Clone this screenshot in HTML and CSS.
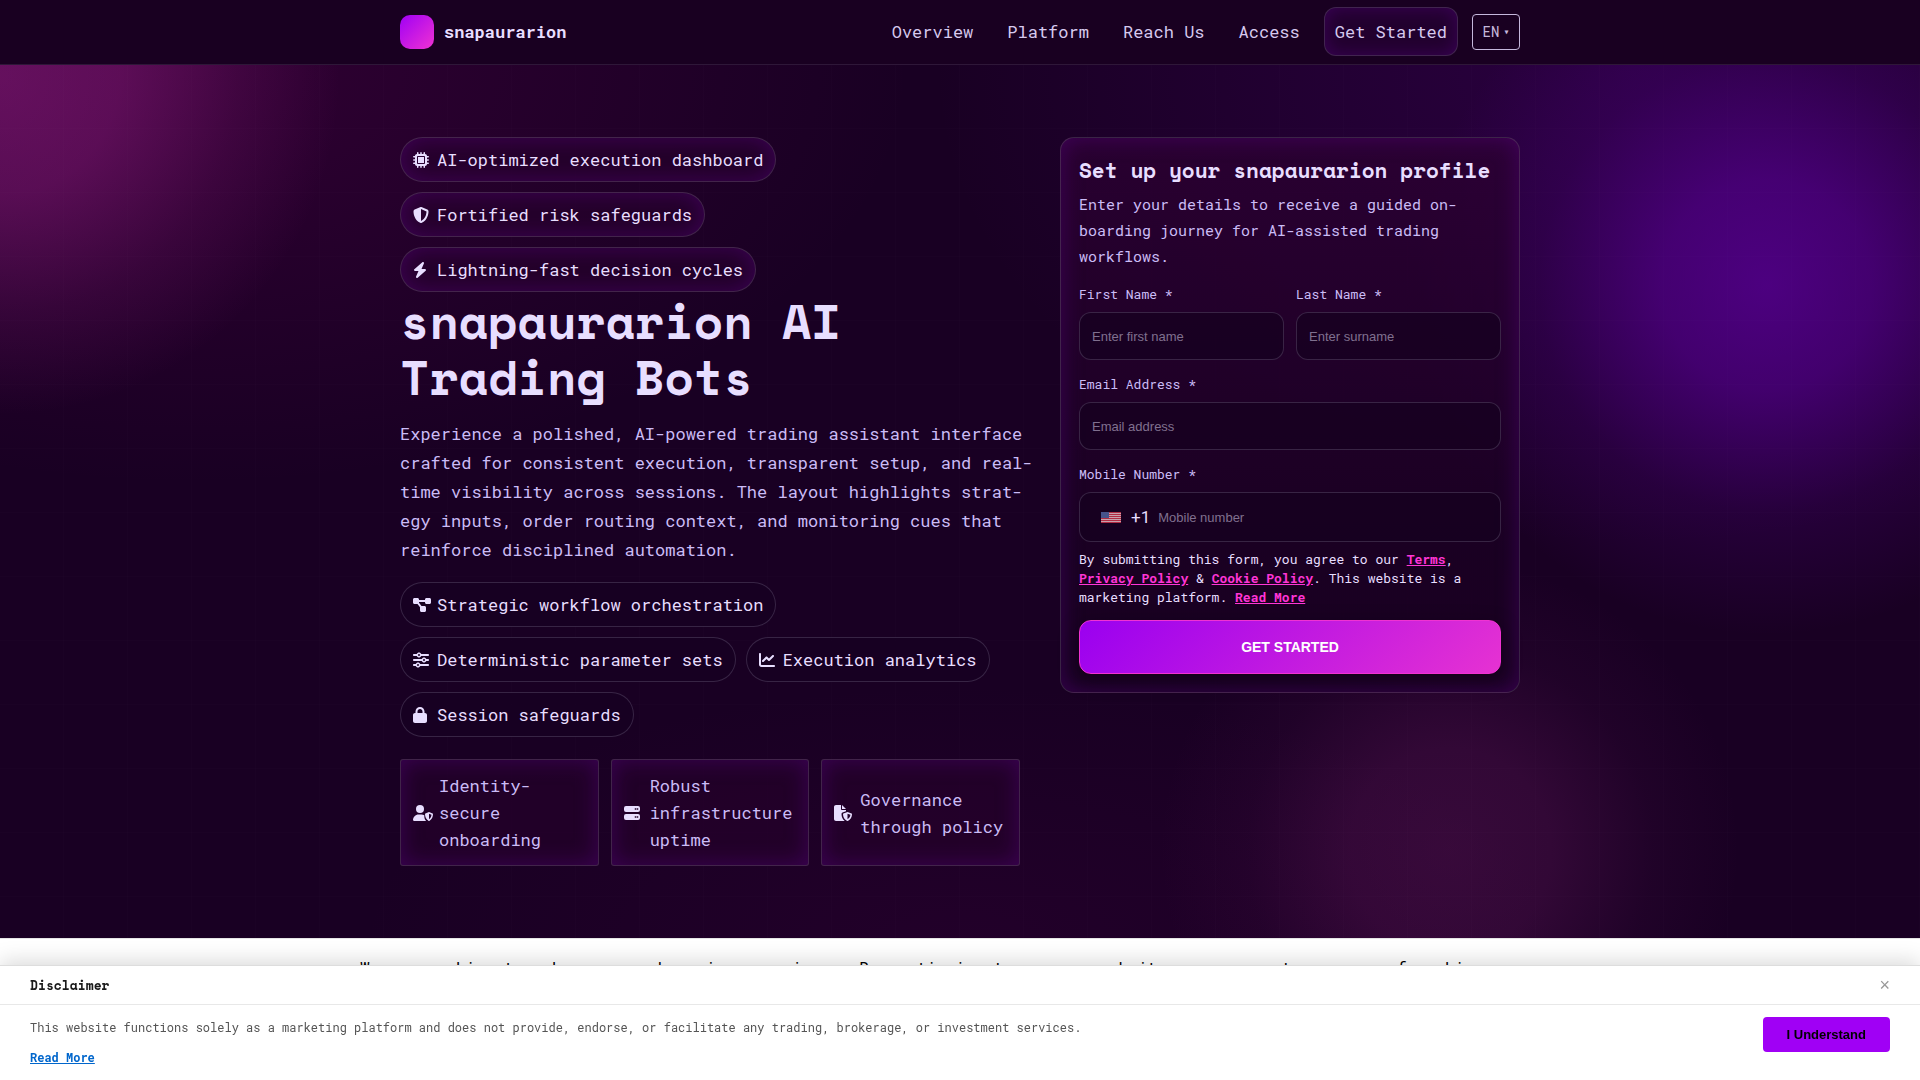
FILE: index.html
```html
<!DOCTYPE html>
<html lang="en">
<head>
  <meta charset="UTF-8">
  <meta name="viewport" content="width=device-width, initial-scale=1.0">
  <title>snapaurarion AI Trading Bots</title>
  <link rel="stylesheet" href="styles.css">
</head>
<body>

  <header class="site-header">
    <div class="container header-inner">
      <a href="#" class="brand"><span class="brand-mark"></span>snapaurarion</a>
      <nav class="main-nav">
        <a href="#overview">Overview</a>
        <a href="#platform">Platform</a>
        <a href="#contact">Reach Us</a>
        <a href="#access">Access</a>
        <a href="#signup" class="nav-cta">Get Started</a>
        <button type="button" class="lang-btn">EN <span class="caret">▾</span></button>
      </nav>
    </div>
  </header>

  <main>
    <section class="hero">
      <div class="container hero-grid">
        <div class="hero-copy">
          <div class="badges">
            <span class="pill glow">
              <span class="icon"><svg viewBox="0 0 512 512" width="16" height="16"><path fill-rule="evenodd" d="M176 24c0-13.3-10.7-24-24-24s-24 10.7-24 24l0 40c-35.3 0-64 28.7-64 64l-40 0c-13.3 0-24 10.7-24 24s10.7 24 24 24l40 0 0 56-40 0c-13.3 0-24 10.7-24 24s10.7 24 24 24l40 0 0 56-40 0c-13.3 0-24 10.7-24 24s10.7 24 24 24l40 0c0 35.3 28.7 64 64 64l0 40c0 13.3 10.7 24 24 24s24-10.7 24-24l0-40 56 0 0 40c0 13.3 10.7 24 24 24s24-10.7 24-24l0-40 56 0 0 40c0 13.3 10.7 24 24 24s24-10.7 24-24l0-40c35.3 0 64-28.7 64-64l40 0c13.3 0 24-10.7 24-24s-10.7-24-24-24l-40 0 0-56 40 0c13.3 0 24-10.7 24-24s-10.7-24-24-24l-40 0 0-56 40 0c13.3 0 24-10.7 24-24s-10.7-24-24-24l-40 0c0-35.3-28.7-64-64-64l0-40c0-13.3-10.7-24-24-24s-24 10.7-24 24l0 40-56 0 0-40c0-13.3-10.7-24-24-24s-24 10.7-24 24l0 40-56 0 0-40zM160 128l192 0c17.7 0 32 14.3 32 32l0 192c0 17.7-14.3 32-32 32l-192 0c-17.7 0-32-14.3-32-32l0-192c0-17.7 14.3-32 32-32zM352 160l-192 0 0 192 192 0z"/></svg></span>
              AI-optimized execution dashboard
            </span>
            <span class="pill glow">
              <span class="icon"><svg viewBox="0 0 512 512" width="16" height="16"><path fill-rule="evenodd" d="M256 0c4.6 0 9.2 1 13.4 2.9L457.7 82.8c22 9.3 38.4 31 38.3 57.2c-.5 99.2-41.3 280.7-213.6 363.2c-16.7 8-36.1 8-52.8 0C57.3 420.7 16.5 239.2 16 140c-.1-26.2 16.3-47.9 38.3-57.2L242.7 2.9C246.8 1 251.4 0 256 0zm0 66.8l0 378.1C394 378 431.1 230.1 432 141.4L256 66.8z"/></svg></span>
              Fortified risk safeguards
            </span>
            <span class="pill glow">
              <span class="icon"><svg viewBox="0 0 448 512" width="14" height="16"><path d="M349.4 44.6c5.9-13.7 1.5-29.7-10.6-38.5s-28.6-8-39.9 1.8l-256 224c-10 8.8-13.6 22.9-8.9 35.3S50.7 288 64 288l111.5 0L98.6 467.4c-5.9 13.7-1.5 29.7 10.6 38.5s28.6 8 39.9-1.8l256-224c10-8.8 13.6-22.9 8.9-35.3s-16.6-20.7-30-20.7l-111.5 0L349.4 44.6z"/></svg></span>
              Lightning-fast decision cycles
            </span>
          </div>

          <h1>snapaurarion AI Trading Bots</h1>

          <p class="lead">Experience a polished, AI-powered trading assistant interface crafted for consistent execution, transparent setup, and real-time visibility across sessions. The layout highlights strat&shy;egy inputs, order routing context, and monitoring cues that reinforce disciplined automation.</p>

          <div class="chips">
            <span class="pill">
              <span class="icon"><svg viewBox="0 0 576 512" width="18" height="16"><path d="M0 80C0 53.5 21.5 32 48 32l96 0c26.5 0 48 21.5 48 48l0 16 192 0 0-16c0-26.5 21.5-48 48-48l96 0c26.5 0 48 21.5 48 48l0 96c0 26.5-21.5 48-48 48l-96 0c-26.5 0-48-21.5-48-48l0-16-192 0 0 16c0 1.7-.1 3.4-.3 5L272 288l96 0c26.5 0 48 21.5 48 48l0 96c0 26.5-21.5 48-48 48l-96 0c-26.5 0-48-21.5-48-48l0-96c0-1.7 .1-3.4 .3-5L144 224l-96 0c-26.5 0-48-21.5-48-48L0 80z"/></svg></span>
              Strategic workflow orchestration
            </span>
            <span class="pill">
              <span class="icon"><svg viewBox="0 0 512 512" width="16" height="16"><path fill-rule="evenodd" d="M0 416c0 17.7 14.3 32 32 32l54.7 0c12.3 28.3 40.5 48 73.3 48s61-19.7 73.3-48L480 448c17.7 0 32-14.3 32-32s-14.3-32-32-32l-246.7 0c-12.3-28.3-40.5-48-73.3-48s-61 19.7-73.3 48L32 384c-17.7 0-32 14.3-32 32zm128 0a32 32 0 1 1 64 0 32 32 0 1 1-64 0zM320 256a32 32 0 1 1 64 0 32 32 0 1 1-64 0zm32-80c-32.8 0-61 19.7-73.3 48L32 224c-17.7 0-32 14.3-32 32s14.3 32 32 32l246.7 0c12.3 28.3 40.5 48 73.3 48s61-19.7 73.3-48l54.7 0c17.7 0 32-14.3 32-32s-14.3-32-32-32l-54.7 0c-12.3-28.3-40.5-48-73.3-48zM192 128a32 32 0 1 1 0-64 32 32 0 1 1 0 64zm73.3-64C253 35.7 224.8 16 192 16s-61 19.7-73.3 48L32 64C14.3 64 0 78.3 0 96s14.3 32 32 32l86.7 0c12.3 28.3 40.5 48 73.3 48s61-19.7 73.3-48L480 128c17.7 0 32-14.3 32-32s-14.3-32-32-32L265.3 64z"/></svg></span>
              Deterministic parameter sets
            </span>
            <span class="pill">
              <span class="icon"><svg viewBox="0 0 512 512" width="16" height="16"><path d="M64 64c0-17.7-14.3-32-32-32S0 46.3 0 64L0 400c0 44.2 35.8 80 80 80l400 0c17.7 0 32-14.3 32-32s-14.3-32-32-32L80 416c-8.8 0-16-7.2-16-16L64 64zm406.6 86.6c12.5-12.5 12.5-32.8 0-45.3s-32.8-12.5-45.3 0L320 210.7l-57.4-57.4c-12.5-12.5-32.8-12.5-45.3 0l-112 112c-12.5 12.5-12.5 32.8 0 45.3s32.8 12.5 45.3 0L240 221.3l57.4 57.4c12.5 12.5 32.8 12.5 45.3 0l128-128z"/></svg></span>
              Execution analytics
            </span>
            <span class="pill">
              <span class="icon"><svg viewBox="0 0 448 512" width="14" height="16"><path fill-rule="evenodd" d="M144 144l0 48 160 0 0-48c0-44.2-35.8-80-80-80s-80 35.8-80 80zM80 192l0-48C80 64.5 144.5 0 224 0s144 64.5 144 144l0 48 16 0c35.3 0 64 28.7 64 64l0 192c0 35.3-28.7 64-64 64L64 512c-35.3 0-64-28.7-64-64L0 256c0-35.3 28.7-64 64-64l16 0z"/></svg></span>
              Session safeguards
            </span>
          </div>

          <div class="trust">
            <div class="trust-card glow">
              <span class="icon"><svg viewBox="0 0 640 512" width="20" height="16"><circle cx="224" cy="128" r="128"/><path d="M178 304h92c34 0 66 10 92 27v37c0 56 20 105 58 144H30c-16 0-30-14-30-30C0 384 80 304 178 304z"/><path fill-rule="evenodd" d="M512 226l116 46c8 3 12 9 12 18c0 92-34 176-118 219c-6 3-14 3-20 0c-84-43-118-127-118-219c0-9 4-15 12-18zM512 282v172c52-32 76-84 79-141z"/></svg></span>
              Identity-secure onboarding
            </div>
            <div class="trust-card glow">
              <span class="icon"><svg viewBox="0 0 512 512" width="16" height="16"><path fill-rule="evenodd" d="M64 32h384a64 64 0 0 1 64 64v64a64 64 0 0 1-64 64H64a64 64 0 0 1-64-64V96a64 64 0 0 1 64-64zM344 104v48h48v-48zM408 104v48h48v-48zM64 288h384a64 64 0 0 1 64 64v64a64 64 0 0 1-64 64H64a64 64 0 0 1-64-64v-64a64 64 0 0 1 64-64zM344 360v48h48v-48zM408 360v48h48v-48z"/></svg></span>
              Robust infrastructure uptime
            </div>
            <div class="trust-card glow">
              <span class="icon"><svg viewBox="0 0 576 512" width="18" height="16"><path d="M64 0h160v128c0 18 14 32 32 32h128v36l-112 46c-20 8-32 27-32 49c0 81 28 164 102 221H64c-35 0-64-29-64-64V64C0 29 29 0 64 0zM256 0l128 128H256z"/><path fill-rule="evenodd" d="M432 226l132 48c8 3 12 9 12 18c0 92-48 176-134 218c-6 3-14 3-20 0c-86-42-134-126-134-218c0-9 4-15 12-18zM432 282v172c60-32 90-84 94-141z"/></svg></span>
              Governance through policy
            </div>
          </div>
        </div>

        <form class="signup glow" id="signup" action="#" method="post">
          <h2>Set up your snapaurarion profile</h2>
          <p class="signup-intro">Enter your details to receive a guided on&shy;boarding journey for AI-assisted trading workflows.</p>

          <div class="form-row">
            <div class="form-group">
              <label for="firstName">First Name *</label>
              <input type="text" id="firstName" placeholder="Enter first name">
            </div>
            <div class="form-group">
              <label for="lastName">Last Name *</label>
              <input type="text" id="lastName" placeholder="Enter surname">
            </div>
          </div>
          <div class="form-group">
            <label for="email">Email Address *</label>
            <input type="email" id="email" placeholder="Email address">
          </div>
          <div class="form-group">
            <label for="phone">Mobile Number *</label>
            <div class="phone-field">
              <svg class="flag" viewBox="0 0 20 11" width="20" height="11"><rect width="20" height="11" fill="#f3c9d0"/><path stroke="#d8384e" d="M0 .5h20M0 2.5h20M0 4.5h20M0 6.5h20M0 8.5h20M0 10.5h20"/><rect width="8" height="6" fill="#5468a8"/></svg>
              <span class="dial-code">+1</span>
              <input type="tel" id="phone" placeholder="Mobile number">
            </div>
          </div>

          <p class="consent">By submitting this form, you agree to our <a href="#">Terms</a>, <a href="#">Privacy Policy</a> &amp; <a href="#">Cookie Policy</a>. This website is a marketing platform. <a href="#">Read More</a></p>
          <button type="submit" class="submit-btn">GET STARTED</button>
        </form>
      </div>
    </section>

    <section class="cookie-note">
      <p>We use cookies to enhance your browsing experience. By continuing to use our website, you agree to our use of cookies.</p>
    </section>
  </main>

  <aside class="disclaimer">
    <div class="disclaimer-head">
      <h3>Disclaimer</h3>
      <button type="button" class="close-btn" aria-label="Close">×</button>
    </div>
    <div class="disclaimer-body">
      <div class="disclaimer-text">
        <p>This website functions solely as a marketing platform and does not provide, endorse, or facilitate any trading, brokerage, or investment services.</p>
        <a href="#">Read More</a>
      </div>
      <button type="button" class="accept-btn">I Understand</button>
    </div>
  </aside>

</body>
</html>
```
FILE: styles.css
```css
:root {
  --bg: #190023;
  --text: #e8deff;
  --muted: #cbbcf6;
  --line: rgba(232, 222, 255, 0.16);
  --violet: #a000f5;
  --pink: #f032d2;
  --mono: "Roboto Mono", "DejaVu Sans Mono", monospace;
  --display: "Space Mono", "DejaVu Sans Mono", monospace;
}

* {
  box-sizing: border-box;
}

body {
  margin: 0;
  background: #fff;
  color: var(--text);
  font-family: var(--mono);
  font-size: 17px;
  line-height: 27px;
}

h1, h2, h3, p {
  margin: 0;
}

.container {
  max-width: 1120px;
  margin: 0 auto;
}

/* header */
.site-header {
  background: #190021;
  border-bottom: 1px solid #2e1738;
}

.header-inner {
  display: flex;
  align-items: center;
  justify-content: space-between;
  padding: 7px 0 8px;
}

.brand {
  display: flex;
  align-items: center;
  gap: 10px;
  color: var(--text);
  font-weight: 700;
  text-decoration: none;
}

.brand-mark {
  width: 34px;
  height: 34px;
  border-radius: 10px;
  background: linear-gradient(135deg, var(--violet), var(--pink));
}

.main-nav {
  display: flex;
  align-items: center;
  gap: 14px;
}

.main-nav a {
  padding: 10px;
  color: #d6c9ee;
  text-decoration: none;
}

.main-nav .nav-cta {
  border: 1px solid var(--line);
  border-radius: 12px;
  background: #22002e;
  box-shadow: inset 0 0 18px rgba(110, 0, 170, 0.32);
}

.lang-btn {
  display: flex;
  align-items: center;
  justify-content: center;
  gap: 4px;
  width: 48px;
  height: 36px;
  padding: 0;
  border: 1px solid #c5b8dc;
  border-radius: 4px;
  background: transparent;
  color: #c5b8dc;
  font-family: var(--mono);
  font-size: 14px;
}

.caret {
  font-size: 10px;
}

/* hero */
.hero {
  padding: 72px 0;
  background:
    linear-gradient(90deg, rgba(255, 255, 255, 0.008) 1px, transparent 1px) -1px 0 / 64px 64px,
    linear-gradient(rgba(255, 255, 255, 0.006) 1px, transparent 1px) 0 -1px / 64px 64px,
    radial-gradient(circle 340px at 0 10px, rgba(190, 40, 165, 0.4) 0%, rgba(190, 40, 165, 0.33) 35%, rgba(190, 40, 165, 0.13) 70%, rgba(190, 40, 165, 0) 100%),
    radial-gradient(circle 350px at 92% 220px, rgba(105, 0, 180, 0.6) 0%, rgba(105, 0, 180, 0.48) 30%, rgba(105, 0, 180, 0.16) 65%, rgba(105, 0, 180, 0) 100%),
    radial-gradient(circle 290px at 75.5% 785px, rgba(150, 40, 130, 0.24) 0%, rgba(150, 40, 130, 0.2) 35%, rgba(150, 40, 130, 0.06) 70%, rgba(150, 40, 130, 0) 100%),
    radial-gradient(ellipse 700px 480px at 85% 0, rgba(110, 0, 180, 0.2), transparent),
    radial-gradient(ellipse 720px 420px at 10% 0, rgba(150, 0, 120, 0.18), transparent),
    radial-gradient(ellipse 600px 260px at 50% 880px, rgba(100, 0, 90, 0.12), transparent),
    var(--bg);
}

.hero-grid {
  display: grid;
  grid-template-columns: 620fr 460fr;
  gap: 40px;
  align-items: start;
}

.badges,
.chips {
  display: flex;
  flex-wrap: wrap;
  gap: 10px;
}

.badges {
  flex-direction: column;
  align-items: flex-start;
  margin-bottom: 1px;
}

.pill {
  display: inline-flex;
  align-items: center;
  gap: 8px;
  padding: 8px 12px;
  border: 1px solid var(--line);
  border-radius: 24px;
  background: rgba(22, 0, 34, 0.6);
}

.glow {
  background: rgba(38, 0, 44, 0.6);
  box-shadow: inset 0 0 22px rgba(110, 0, 170, 0.34);
}

.icon {
  display: flex;
  flex: 0 0 16px;
  width: 16px;
}

.icon svg {
  flex: none;
  fill: var(--text);
}

h1 {
  font-family: var(--display);
  font-size: 48px;
  line-height: 56px;
}

/* runs slightly into the column gap */
.lead {
  margin: 14px -14px 18px 0;
  color: var(--muted);
  line-height: 29px;
}

.trust {
  display: grid;
  grid-template-columns: repeat(3, 1fr);
  gap: 12px;
  margin-top: 22px;
}

.trust-card {
  display: flex;
  align-items: center;
  gap: 10px;
  padding: 12px;
  border: 1px solid var(--line);
  border-radius: 3px;
  color: var(--muted);
}

/* sign-up card */
.signup {
  display: flex;
  flex-direction: column;
  padding: 18px;
  border: 1px solid var(--line);
  border-radius: 14px;
  background: linear-gradient(rgba(44, 0, 50, 0.8), rgba(26, 0, 34, 0.8) 75%);
}

.signup h2 {
  margin-bottom: 6px;
  font-family: var(--display);
  font-size: 21px;
  line-height: 29px;
}

.signup-intro {
  margin-bottom: 13px;
  color: var(--muted);
  font-size: 15px;
  line-height: 26px;
}

.form-row {
  display: grid;
  grid-template-columns: 1fr 1fr;
  gap: 12px;
}

.form-group {
  display: flex;
  flex-direction: column;
  gap: 6px;
  margin-bottom: 12px;
}

label {
  color: var(--muted);
  font-size: 13px;
  line-height: 24px;
}

input {
  width: 100%;
  min-width: 0;
  height: 48px;
  padding: 0 12px;
  border: 1px solid var(--line);
  border-radius: 12px;
  outline: none;
  background: rgba(22, 0, 32, 0.7);
  color: var(--text);
  font-family: "Liberation Sans", Arial, sans-serif;
  font-size: 13px;
}

input::placeholder {
  color: #80708f;
}

.phone-field {
  display: flex;
  align-items: center;
  height: 50px;
  padding-left: 21px;
  border: 1px solid var(--line);
  border-radius: 12px;
  background: rgba(22, 0, 32, 0.7);
}

.phone-field input {
  height: 46px;
  padding: 0 8px;
  border: none;
  background: none;
}

.flag {
  flex: none;
  opacity: 0.8;
}

.dial-code {
  margin-left: 10px;
  font-family: Roboto, sans-serif;
}

.consent {
  margin-top: -4px;
  margin-bottom: 13px;
  font-size: 13px;
  line-height: 19px;
}

.consent a {
  color: #ff35d6;
  font-weight: 700;
}

.submit-btn {
  height: 54px;
  border: 1px solid var(--pink);
  border-radius: 12px;
  background: linear-gradient(135deg, #9a00f0, #e632d2);
  box-shadow: 0 6px 18px rgba(10, 0, 16, 0.5);
  color: #fff;
  font-family: "Liberation Sans", Arial, sans-serif;
  font-size: 14px;
  font-weight: 700;
}

/* cookie strip */
.cookie-note {
  padding: 15px 0 120px;
  border-top: 1px solid #e5e5e5;
  color: #000;
  font-size: 16px;
}

.cookie-note p {
  max-width: 1200px;
  margin: 0 auto;
}

/* disclaimer bar */
.disclaimer {
  position: fixed;
  right: 0;
  bottom: 0;
  left: 0;
  border-top: 1px solid #ddd;
  background: #fff;
  box-shadow: 0 -4px 20px rgba(0, 0, 0, 0.15);
}

.disclaimer-head {
  display: flex;
  align-items: center;
  justify-content: space-between;
  padding: 5px 30px;
  border-bottom: 1px solid #e8e8e8;
}

.disclaimer-head h3 {
  color: #1a1a1a;
  font-family: var(--display);
  font-size: 13px;
  line-height: 28px;
}

.close-btn {
  padding: 0;
  border: none;
  background: none;
  color: #999;
  font-family: "Liberation Sans", Arial, sans-serif;
  font-size: 18px;
  line-height: 28px;
}

.disclaimer-body {
  display: flex;
  align-items: flex-start;
  justify-content: space-between;
  gap: 30px;
  padding: 12px 30px 13px;
}

.disclaimer-text {
  color: #555;
  font-size: 12px;
  line-height: 20px;
}

.disclaimer-text p {
  margin-bottom: 10px;
}

.disclaimer-text a {
  color: #0066cc;
  font-weight: 700;
}

.accept-btn {
  padding: 10px 24px;
  border: none;
  border-radius: 4px;
  background: var(--violet);
  color: #000;
  font-family: "Liberation Sans", Arial, sans-serif;
  font-size: 13px;
  font-weight: 700;
  line-height: 15px;
  white-space: nowrap;
}
```
